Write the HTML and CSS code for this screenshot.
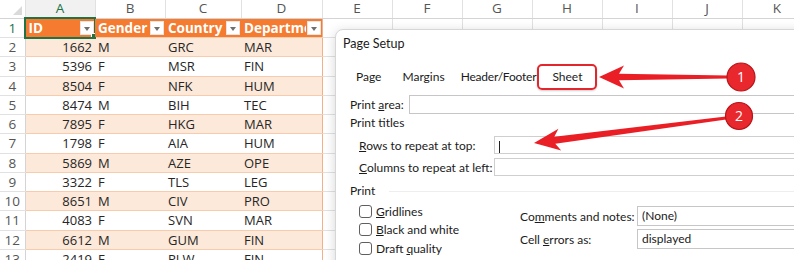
FILE: index.html
```html
<!DOCTYPE html>
<html lang="en">
<head>
    <meta charset="UTF-8">
    <title>Page Setup - Sheet</title>
    <link rel="stylesheet" href="styles.css">
</head>
<body>
    <table class="sheet">
        <colgroup>
            <col class="c-row"><col class="c-a"><col class="c-b"><col class="c-c"><col class="c-d">
            <col class="c-x"><col class="c-x"><col class="c-x"><col class="c-x"><col class="c-x"><col class="c-x"><col class="c-x">
        </colgroup>
        <tr class="col-heads">
            <th class="corner"><span class="corner-tri"></span></th>
            <th class="sel">A</th><th>B</th><th>C</th><th>D</th><th>E</th><th>F</th><th>G</th><th>H</th><th>I</th><th>J</th><th>K</th>
        </tr>
        <tr class="head-row">
            <th class="rn sel">1</th>
            <td class="tb tb-first active"><span class="hd-text">ID</span><span class="filter"></span></td>
            <td class="tb"><span class="hd-text">Gender</span><span class="filter"></span></td>
            <td class="tb"><span class="hd-text">Country</span><span class="filter"></span></td>
            <td class="tb tb-last"><span class="hd-text">Department</span><span class="filter"></span></td>
            <td></td><td></td><td></td><td></td><td></td><td></td><td></td>
        </tr>
        <tr class="band"><th class="rn">2</th><td class="tb tb-first num">1662</td><td class="tb">M</td><td class="tb">GRC</td><td class="tb tb-last">MAR</td><td></td><td></td><td></td><td></td><td></td><td></td><td></td></tr>
        <tr><th class="rn">3</th><td class="tb tb-first num">5396</td><td class="tb">F</td><td class="tb">MSR</td><td class="tb tb-last">FIN</td><td></td><td></td><td></td><td></td><td></td><td></td><td></td></tr>
        <tr class="band"><th class="rn">4</th><td class="tb tb-first num">8504</td><td class="tb">F</td><td class="tb">NFK</td><td class="tb tb-last">HUM</td><td></td><td></td><td></td><td></td><td></td><td></td><td></td></tr>
        <tr><th class="rn">5</th><td class="tb tb-first num">8474</td><td class="tb">M</td><td class="tb">BIH</td><td class="tb tb-last">TEC</td><td></td><td></td><td></td><td></td><td></td><td></td><td></td></tr>
        <tr class="band"><th class="rn">6</th><td class="tb tb-first num">7895</td><td class="tb">F</td><td class="tb">HKG</td><td class="tb tb-last">MAR</td><td></td><td></td><td></td><td></td><td></td><td></td><td></td></tr>
        <tr><th class="rn">7</th><td class="tb tb-first num">1798</td><td class="tb">F</td><td class="tb">AIA</td><td class="tb tb-last">HUM</td><td></td><td></td><td></td><td></td><td></td><td></td><td></td></tr>
        <tr class="band"><th class="rn">8</th><td class="tb tb-first num">5869</td><td class="tb">M</td><td class="tb">AZE</td><td class="tb tb-last">OPE</td><td></td><td></td><td></td><td></td><td></td><td></td><td></td></tr>
        <tr><th class="rn">9</th><td class="tb tb-first num">3322</td><td class="tb">F</td><td class="tb">TLS</td><td class="tb tb-last">LEG</td><td></td><td></td><td></td><td></td><td></td><td></td><td></td></tr>
        <tr class="band"><th class="rn">10</th><td class="tb tb-first num">8651</td><td class="tb">M</td><td class="tb">CIV</td><td class="tb tb-last">PRO</td><td></td><td></td><td></td><td></td><td></td><td></td><td></td></tr>
        <tr><th class="rn">11</th><td class="tb tb-first num">4083</td><td class="tb">F</td><td class="tb">SVN</td><td class="tb tb-last">MAR</td><td></td><td></td><td></td><td></td><td></td><td></td><td></td></tr>
        <tr class="band"><th class="rn">12</th><td class="tb tb-first num">6612</td><td class="tb">M</td><td class="tb">GUM</td><td class="tb tb-last">FIN</td><td></td><td></td><td></td><td></td><td></td><td></td><td></td></tr>
        <tr><th class="rn">13</th><td class="tb tb-first num">2419</td><td class="tb">F</td><td class="tb">PLW</td><td class="tb tb-last">FIN</td><td></td><td></td><td></td><td></td><td></td><td></td><td></td></tr>
    </table>

    <div class="dialog">
        <div class="dlg-title">
            <span>Page Setup</span>
            <span class="help">?</span>
        </div>
        <div class="tabs">
            <span class="tab">Page</span>
            <span class="tab">Margins</span>
            <span class="tab">Header/Footer</span>
            <span class="tab active">Sheet</span>
        </div>
        <div class="form">
            <div class="field area">
                <label>Print <u>a</u>rea:</label>
                <div class="input"></div>
            </div>
            <div class="group-label">Print titles</div>
            <div class="field titles">
                <label><u>R</u>ows to repeat at top:</label>
                <div class="input"><span class="caret"></span></div>
            </div>
            <div class="field titles">
                <label><u>C</u>olumns to repeat at left:</label>
                <div class="input"></div>
            </div>
            <div class="section">
                <span>Print</span>
                <span class="rule"></span>
            </div>
            <div class="print-opts">
                <div class="checks">
                    <div class="check"><span class="box"></span><span><u>G</u>ridlines</span></div>
                    <div class="check"><span class="box"></span><span><u>B</u>lack and white</span></div>
                    <div class="check"><span class="box"></span><span>Draft <u>q</u>uality</span></div>
                </div>
                <div class="selects">
                    <div class="field sel-field">
                        <label>Co<u>m</u>ments and notes:</label>
                        <div class="input">(None)</div>
                    </div>
                    <div class="field sel-field">
                        <label>Cell <u>e</u>rrors as:</label>
                        <div class="input">displayed</div>
                    </div>
                </div>
            </div>
        </div>
    </div>

    <svg class="callouts" width="794" height="260" viewBox="0 0 794 260">
        <polygon class="arrow" points="599,77 624,65.5 619,73.8 728,75.6 728,78.4 619,80.2 624,88.5"/>
        <polygon class="arrow" points="534,143 561.2,150.5 555.3,143.8 726.2,119.6 725.8,116.4 554.3,136.8 558.4,128.7"/>
        <circle class="badge" cx="741" cy="77" r="14"/>
        <text class="badge-num" x="741" y="82">1</text>
        <circle class="badge" cx="739" cy="116" r="13.5"/>
        <text class="badge-num" x="739" y="121">2</text>
    </svg>
</body>
</html>
```

FILE: styles.css
```css
body {
    margin: 0;
    background: #fff;
    overflow: hidden;
    width: 794px;
    height: 260px;
    position: relative;
}

/* spreadsheet */

.sheet {
    border-collapse: collapse;
    table-layout: fixed;
    width: 812px;
    font-family: "Open Sans", sans-serif;
    font-size: 13px;
    color: #262626;
}

.c-row { width: 25px; }
.c-a { width: 70px; }
.c-b { width: 70px; }
.c-c { width: 76px; }
.c-d { width: 81px; }
.c-x { width: 70px; }

.sheet tr {
    height: 19.25px;
}

.sheet .col-heads {
    height: 18px;
}

.col-heads th {
    font-weight: normal;
    color: #555;
    font-size: 13.5px;
    border-right: 1px solid #e1e1e1;
    border-bottom: 1px solid #d4d4d4;
    padding: 0;
    line-height: 17px;
}

.col-heads th.sel {
    color: #217346;
    background: #f1f1f1;
    border-bottom: 2px solid #217346;
}

.corner {
    position: relative;
}

.corner-tri {
    position: absolute;
    right: 3px;
    bottom: 3px;
    width: 0;
    height: 0;
    border-left: 9px solid transparent;
    border-bottom: 9px solid #dadada;
}

.rn {
    font-weight: normal;
    color: #555;
    font-size: 13.5px;
    border-right: 1px solid #d4d4d4;
    border-bottom: 1px solid #e1e1e1;
    padding: 0;
    text-align: center;
}

.rn.sel {
    color: #217346;
}

.sheet td {
    border-right: 1px solid #e1e1e1;
    border-bottom: 1px solid #e1e1e1;
    padding: 0 3px;
    white-space: nowrap;
    overflow: hidden;
    line-height: 18px;
}

.sheet td.tb {
    border-right: none;
    border-bottom: 1px solid #f8cbad;
}

.sheet td.tb-first {
    border-left: 1px solid #f4b084;
}

.sheet td.tb-last {
    border-right: 1px solid #f4b084;
}

.band td.tb {
    background: #fde9d9;
}

.num {
    text-align: right;
}

.head-row td.tb {
    position: relative;
    background: #f47b30;
    color: #fff;
    font-weight: bold;
    font-size: 13.5px;
    padding: 0 1px 0 3px;
}

.head-row td.tb > .hd-text {
    display: block;
    overflow: hidden;
    margin-right: 15px;
}

.filter {
    position: absolute;
    right: 1px;
    top: 2px;
    width: 14px;
    height: 14px;
    background: #fff;
    border: 1px solid #e6e6e6;
    box-sizing: border-box;
}

.filter::after {
    content: "";
    position: absolute;
    left: 3px;
    top: 5px;
    border-left: 3.5px solid transparent;
    border-right: 3.5px solid transparent;
    border-top: 4px solid #707070;
}

.head-row td.active {
    outline: 2px solid #217346;
    outline-offset: -1px;
}

.head-row td.active::after {
    content: "";
    position: absolute;
    right: -3px;
    bottom: -3px;
    width: 5px;
    height: 5px;
    background: #217346;
    border: 1px solid #fff;
}

/* dialog */

.dialog {
    position: absolute;
    left: 335px;
    top: 29px;
    width: 480px;
    height: 250px;
    background: #fff;
    border: 1px solid #d6d6d6;
    border-radius: 8px 0 0 0;
    box-shadow: 0 2px 12px rgba(0, 0, 0, 0.16);
    font-family: Lato, "Open Sans", sans-serif;
    font-size: 12px;
    color: #1b1b1b;
    box-sizing: border-box;
    white-space: nowrap;
}

.dlg-title {
    display: flex;
    justify-content: space-between;
    align-items: center;
    padding: 5px 13px 0 7px;
    height: 17px;
    font-size: 12.5px;
}

.help {
    font-weight: bold;
}

.tabs {
    display: flex;
    align-items: center;
    margin-top: 12px;
    padding-left: 11px;
    height: 26px;
}

.tab {
    padding: 0 9px;
    line-height: 22px;
}

.tab:nth-child(2) {
    padding-left: 12px;
}

.tab:nth-child(3) {
    padding-left: 7px;
    letter-spacing: -0.2px;
}

.tab.active {
    margin-left: -8px;
    padding: 0 13px;
    border: 2px solid #e3262c;
    border-radius: 5px;
    box-shadow: 0 1px 2px rgba(0, 0, 0, 0.2);
}

.form {
    padding: 5px 0 0 14px;
}

.field {
    display: flex;
    align-items: center;
}

.field label {
    flex: none;
}

.input {
    flex: 1;
    height: 19px;
    border: 1px solid #c6c6c6;
    border-right: none;
    box-sizing: border-box;
    padding: 0 4px;
    line-height: 17px;
}

.area label {
    width: 59px;
}

.group-label {
    line-height: 18px;
}

.titles {
    padding-left: 9px;
    margin-top: 4px;
}

.titles label {
    width: 135px;
}

.titles .input {
    height: 18px;
    border-color: #cfcfcf;
}

.titles + .titles {
    margin-top: 4px;
}

.caret {
    display: inline-block;
    width: 1px;
    height: 12px;
    background: #222;
    vertical-align: middle;
}

.section {
    display: flex;
    align-items: center;
    margin-top: 6px;
    line-height: 18px;
}

.rule {
    flex: 1;
    height: 1px;
    background: #eeeeee;
    margin-left: 14px;
}

.print-opts {
    display: flex;
    margin-top: 2px;
}

.checks {
    width: 161px;
    padding-left: 9px;
}

.check {
    display: flex;
    align-items: center;
    gap: 4px;
    height: 18.5px;
}

.box {
    width: 11px;
    height: 11px;
    border: 1px solid #5f5f5f;
    border-radius: 3px;
}

.selects {
    flex: 1;
    padding-top: 4px;
}

.sel-field label {
    width: 117px;
}

.sel-field .input {
    height: 20px;
    line-height: 18px;
}

.sel-field + .sel-field {
    margin-top: 3px;
}

/* annotations */

.callouts {
    position: absolute;
    left: 0;
    top: 0;
}

.arrow {
    fill: #ea1f26;
}

.badge {
    fill: #e8282d;
    stroke: #b71419;
    stroke-width: 1.2;
}

.badge-num {
    fill: #fff;
    font-family: "Open Sans", sans-serif;
    font-size: 14px;
    text-anchor: middle;
}
```
